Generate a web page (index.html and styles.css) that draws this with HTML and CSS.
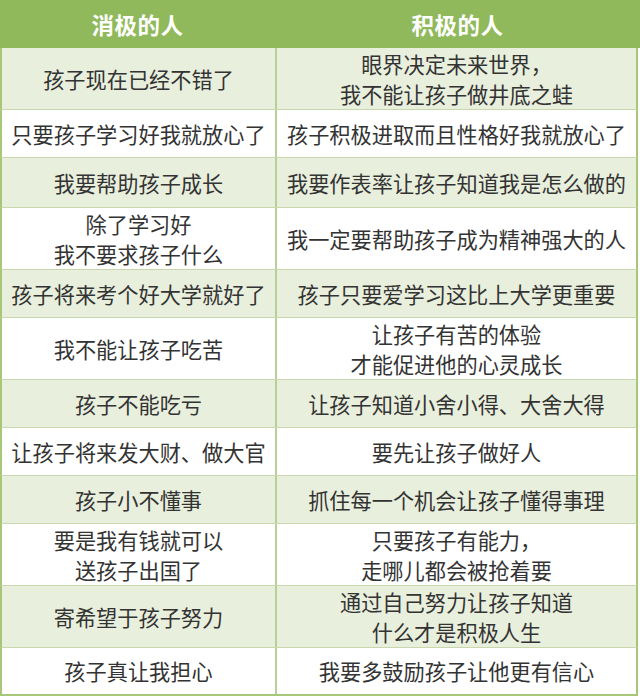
FILE: index.html
```html
<!DOCTYPE html>
<html lang="zh">
<head>
<meta charset="utf-8">
<link rel="stylesheet" href="styles.css">
</head>
<body>
<div class="table">
  <div class="head">
    <div class="hcell left">消极的人</div>
    <div class="hcell right">积极的人</div>
  </div>
  <div class="row tint tall"><div class="cell left">孩子现在已经不错了</div><div class="cell right">眼界决定未来世界，<br>我不能让孩子做井底之蛙</div></div>
  <div class="row"><div class="cell left">只要孩子学习好我就放心了</div><div class="cell right">孩子积极进取而且性格好我就放心了</div></div>
  <div class="row tint mid"><div class="cell left">我要帮助孩子成长</div><div class="cell right">我要作表率让孩子知道我是怎么做的</div></div>
  <div class="row tall"><div class="cell left">除了学习好<br>我不要求孩子什么</div><div class="cell right">我一定要帮助孩子成为精神强大的人</div></div>
  <div class="row tint"><div class="cell left">孩子将来考个好大学就好了</div><div class="cell right">孩子只要爱学习这比上大学更重要</div></div>
  <div class="row tall"><div class="cell left">我不能让孩子吃苦</div><div class="cell right">让孩子有苦的体验<br>才能促进他的心灵成长</div></div>
  <div class="row tint"><div class="cell left">孩子不能吃亏</div><div class="cell right">让孩子知道小舍小得、大舍大得</div></div>
  <div class="row"><div class="cell left">让孩子将来发大财、做大官</div><div class="cell right">要先让孩子做好人</div></div>
  <div class="row tint"><div class="cell left">孩子小不懂事</div><div class="cell right">抓住每一个机会让孩子懂得事理</div></div>
  <div class="row tall"><div class="cell left">要是我有钱就可以<br>送孩子出国了</div><div class="cell right">只要孩子有能力，<br>走哪儿都会被抢着要</div></div>
  <div class="row tint tall"><div class="cell left">寄希望于孩子努力</div><div class="cell right">通过自己努力让孩子知道<br>什么才是积极人生</div></div>
  <div class="row last"><div class="cell left">孩子真让我担心</div><div class="cell right">我要多鼓励孩子让他更有信心</div></div>
</div>
</body>
</html>
```

FILE: styles.css
```css
html, body {
  margin: 0;
  padding: 0;
  background: #ffffff;
}

body {
  font-family: "Noto Sans CJK SC", "Noto Sans", sans-serif;
  color: #333333;
}

.table {
  width: 640px;
}

.head {
  display: grid;
  grid-template-columns: 275px 363px;
  height: 48px;
  background: #8fb95a;
  width: 640px;
}

.hcell {
  display: flex;
  align-items: center;
  justify-content: center;
  color: #ffffff;
  font-size: 22.5px;
  font-weight: 700;
  letter-spacing: 0.5px;
}

.hcell.right {
  padding-left: 2px;
}

.row {
  display: grid;
  grid-template-columns: 273px 2px 359px;
  width: 638px;
  height: 48px;
  box-sizing: border-box;
  border-left: 2px solid #a6c678;
  border-right: 2px solid #a6c678;
  border-bottom: 1px solid #c8d8ac;
  background: #ffffff;
}

.row.tint {
  background: #e9efdd;
}

.row.tall {
  height: 62px;
}

.row.mid {
  height: 50px;
}

.row.last {
  height: 48px;
  border-bottom: 2px solid #a6c678;
}

.cell {
  display: flex;
  align-items: center;
  justify-content: center;
  text-align: center;
  font-size: 21.2px;
  line-height: 30px;
  white-space: nowrap;
}

.cell.left {
  grid-column: 1;
}

.cell.right {
  grid-column: 3;
  border-left: 2px solid #b8cf98;
  margin-left: -2px;
}
```
